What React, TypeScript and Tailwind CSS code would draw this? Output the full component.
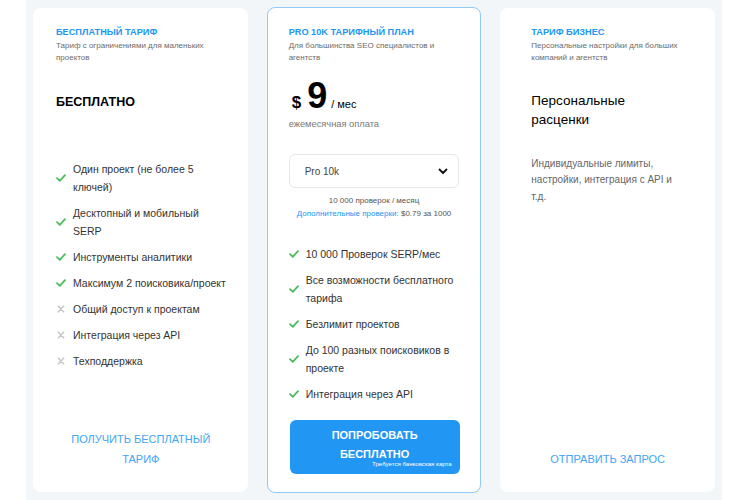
import React from "react";

const Check = () => (
  <svg width="10" height="8" viewBox="0 0 10 8" className="shrink-0">
    <path d="M1 4.2 L3.8 6.8 L9 1.2" fill="none" stroke="#4cbb5e" strokeWidth="1.8" strokeLinecap="round" strokeLinejoin="round" />
  </svg>
);

const Cross = () => (
  <svg width="10" height="8" viewBox="0 0 10 8" className="shrink-0">
    <path d="M2.2 1 L7.8 7 M7.8 1 L2.2 7" fill="none" stroke="#c4c4c4" strokeWidth="1.3" strokeLinecap="round" />
  </svg>
);

function Feature({ ok, children }: { ok: boolean; children: React.ReactNode }) {
  return (
    <li className="flex items-center gap-[7px] text-[10.5px] leading-[18px] text-[#333]">
      {ok ? <Check /> : <Cross />}
      <span>{children}</span>
    </li>
  );
}

function Head({ label, text }: { label: string; text: string }) {
  return (
    <div>
      <div className="text-[9.2px] leading-[13px] font-bold text-[#2196f3]">{label}</div>
      <p className="mt-[1.5px] text-[8px] leading-[12px] text-[#6b6b6b] max-w-[165px]">{text}</p>
    </div>
  );
}

export default function App() {
  return (
    <div className="w-[750px] h-[500px] overflow-hidden bg-white" style={{ fontFamily: '"Liberation Sans", Arial, sans-serif' }}>
      <div className="ml-[26px] w-[696px] h-[508px] bg-[#f3f6f9] px-[7px] pt-[8px] pb-[8px] grid grid-cols-3 gap-[19px]">
        {/* free */}
        <section className="h-[484px] bg-white rounded-lg pl-[23px] pr-[14px] pt-[17.5px] pb-[23px] flex flex-col">
          <Head label="БЕСПЛАТНЫЙ ТАРИФ" text="Тариф с ограничениями для маленьких проектов" />
          <h2 className="mt-[29px] text-[12.5px] leading-[18px] font-bold text-black">БЕСПЛАТНО</h2>
          <ul className="mt-[49px] flex flex-col gap-2">
            <Feature ok>Один проект (не более 5<br />ключей)</Feature>
            <Feature ok>Десктопный и мобильный<br />SERP</Feature>
            <Feature ok>Инструменты аналитики</Feature>
            <Feature ok>Максимум 2 поисковика/проект</Feature>
            <Feature ok={false}>Общий доступ к проектам</Feature>
            <Feature ok={false}>Интеграция через API</Feature>
            <Feature ok={false}>Техподдержка</Feature>
          </ul>
          <button className="mt-auto mr-[8px] text-center text-[11px] leading-[20px] text-[#42a5f5]">
            ПОЛУЧИТЬ БЕСПЛАТНЫЙ
            <br />
            ТАРИФ
          </button>
        </section>

        {/* pro */}
        <section className="h-[486px] -mt-px bg-white rounded-lg border border-[#90caf9] pl-[21px] pr-[21px] pt-[17.5px] pb-[18px] flex flex-col">
          <Head label="PRO 10K ТАРИФНЫЙ ПЛАН" text="Для большинства SEO специалистов и агентств" />
          <div className="mt-[13.5px] flex items-baseline text-black">
            <span className="text-[17px] font-bold ml-[3px]">$</span>
            <span className="text-[36px] leading-none font-bold ml-[6px]">9</span>
            <span className="text-[11px] ml-[4px]">/ мес</span>
          </div>
          <div className="mt-[3px] text-[9.3px] leading-[13px] text-[#777]">ежемесячная оплата</div>
          <div className="mt-[23px] h-[34px] border border-[#e4e7eb] rounded-md flex items-center justify-between pl-[15px] pr-[10px]">
            <span className="text-[10px] text-[#444]">Pro 10k</span>
            <svg width="10" height="7" viewBox="0 0 10 7">
              <path d="M1.5 1.5 L5 5 L8.5 1.5" fill="none" stroke="#111" strokeWidth="1.8" strokeLinecap="round" strokeLinejoin="round" />
            </svg>
          </div>
          <div className="mt-[5.5px] text-center text-[8px] leading-[13px] text-[#555]">
            <div>10 000 проверок / месяц</div>
            <div>
              <span className="text-[#2196f3]">Дополнительные проверки:</span> $0.79 за 1000
            </div>
          </div>
          <ul className="mt-[25.5px] flex flex-col gap-2">
            <Feature ok>10 000 Проверок SERP/мес</Feature>
            <Feature ok>Все возможности бесплатного<br />тарифа</Feature>
            <Feature ok>Безлимит проектов</Feature>
            <Feature ok>До 100 разных поисковиков в<br />проекте</Feature>
            <Feature ok>Интеграция через API</Feature>
          </ul>
          <button className="mt-auto ml-px relative h-[54px] w-[170px] rounded-md bg-[#2196f3] text-white text-[11px] leading-[19px] font-bold pb-[4px]">
            ПОПРОБОВАТЬ
            <br />
            БЕСПЛАТНО
            <span className="absolute right-[8px] bottom-[7px] text-[6.1px] leading-none font-normal">Требуется банковская карта</span>
          </button>
        </section>

        {/* business */}
        <section className="h-[484px] bg-white rounded-lg pl-[31px] pr-[22px] pt-[17.5px] pb-[23px] flex flex-col">
          <Head label="ТАРИФ БИЗНЕС" text="Персональные настройки для больших компаний и агентств" />
          <h2 className="mt-[26.5px] text-[13.5px] leading-[19px] text-black max-w-[130px]">Персональные расценки</h2>
          <p className="mt-[27px] text-[10px] leading-[16.5px] text-[#666] max-w-[152px]">
            Индивидуальные лимиты, настройки, интеграция с API и т.д.
          </p>
          <button className="mt-auto mr-[9px] text-center text-[11px] leading-[20px] text-[#42a5f5]">ОТПРАВИТЬ ЗАПРОС</button>
        </section>
      </div>
    </div>
  );
}
